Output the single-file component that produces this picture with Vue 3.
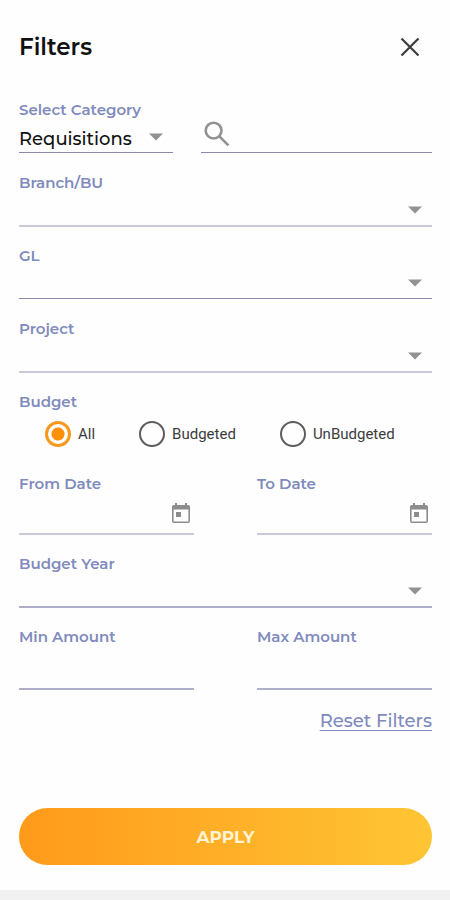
<script setup>
import { reactive } from 'vue'

const defaults = {
  category: 'Requisitions',
  search: '',
  branch: '',
  gl: '',
  project: '',
  budget: 'all',
  from: '',
  to: '',
  year: '',
  min: '',
  max: '',
}
const form = reactive({ ...defaults })

const pickers = [
  { key: 'branch', label: 'Branch/BU', line: 'soft' },
  { key: 'gl', label: 'GL', line: 'thin' },
  { key: 'project', label: 'Project', line: 'soft' },
]
const budgets = [
  { value: 'all', label: 'All' },
  { value: 'budgeted', label: 'Budgeted' },
  { value: 'unbudgeted', label: 'UnBudgeted' },
]
const dates = [
  { key: 'from', label: 'From Date' },
  { key: 'to', label: 'To Date' },
]
const amounts = [
  { key: 'min', label: 'Min Amount' },
  { key: 'max', label: 'Max Amount' },
]

function reset() {
  Object.assign(form, defaults)
}
</script>

<template>
  <main class="panel">
    <header class="header">
      <h1 class="title">Filters</h1>
      <button class="icon-button" type="button" aria-label="Close">
        <svg width="20" height="20" viewBox="0 0 20 20">
          <path d="M1.5 1.5l17 17M18.5 1.5l-17 17" fill="none" stroke="#3c3c3c" stroke-width="2.2" />
        </svg>
      </button>
    </header>

    <form class="form" @submit.prevent>
      <div class="top-row">
        <div class="field">
          <label class="label" for="category">Select Category</label>
          <div class="control thin">
            <select id="category" v-model="form.category" class="input">
              <option>Requisitions</option>
            </select>
            <svg class="arrow" width="14" height="8" viewBox="0 0 14 8"><path d="M0 .5h14l-7 7z" /></svg>
          </div>
        </div>
        <div class="control thin search">
          <svg class="lens" width="26" height="26" viewBox="0 0 26 26">
            <circle cx="9.6" cy="9.6" r="7.9" />
            <path d="M15.4 15.4l9 9" />
          </svg>
          <input v-model="form.search" class="input" type="search" aria-label="Search" />
        </div>
      </div>

      <div v-for="p in pickers" :key="p.key" class="field">
        <label class="label" :for="p.key">{{ p.label }}</label>
        <div class="control" :class="p.line">
          <select :id="p.key" v-model="form[p.key]" class="input">
            <option value=""></option>
          </select>
          <svg class="arrow" width="14" height="8" viewBox="0 0 14 8"><path d="M0 .5h14l-7 7z" /></svg>
        </div>
      </div>

      <fieldset class="budget">
        <legend class="label">Budget</legend>
        <div class="radios">
          <label v-for="b in budgets" :key="b.value" class="radio">
            <input v-model="form.budget" class="dot" type="radio" name="budget" :value="b.value" />
            <span>{{ b.label }}</span>
          </label>
        </div>
      </fieldset>

      <div class="pair">
        <div v-for="d in dates" :key="d.key" class="field">
          <label class="label" :for="d.key">{{ d.label }}</label>
          <div class="control soft date">
            <input :id="d.key" v-model="form[d.key]" class="input" type="text" />
            <button class="icon-button calendar" type="button" :aria-label="d.label">
              <svg width="24" height="24" viewBox="0 0 24 24">
                <path d="M19 3h-1V1h-2v2H8V1H6v2H5c-1.1 0-2 .9-2 2v14c0 1.1.9 2 2 2h14c1.1 0 2-.9 2-2V5c0-1.1-.9-2-2-2zm.4 16.4H4.6V7.5h14.8v11.9zM7 10h5v5H7z" />
              </svg>
            </button>
          </div>
        </div>
      </div>

      <div class="field">
        <label class="label" for="year">Budget Year</label>
        <div class="control">
          <select id="year" v-model="form.year" class="input">
            <option value=""></option>
          </select>
          <svg class="arrow" width="14" height="8" viewBox="0 0 14 8"><path d="M0 .5h14l-7 7z" /></svg>
        </div>
      </div>

      <div class="pair">
        <div v-for="a in amounts" :key="a.key" class="field">
          <label class="label" :for="a.key">{{ a.label }}</label>
          <div class="control amount">
            <input :id="a.key" v-model="form[a.key]" class="input" type="text" inputmode="decimal" />
          </div>
        </div>
      </div>

      <a class="reset" href="#" @click.prevent="reset">Reset Filters</a>
      <button class="apply" type="submit">APPLY</button>
    </form>
  </main>
</template>

<style>
html {
  background: #f1f1f1;
}
</style>

<style scoped>
.panel {
  box-sizing: border-box;
  padding: 32px 18px 25px 19px;
  background: #fefefe;
  color: #111;
  font-family: Montserrat, Inter, sans-serif;
}
.header {
  display: flex;
  align-items: center;
  justify-content: space-between;
  height: 30px;
  padding-right: 12px;
  margin-bottom: 38px;
}
.title {
  margin: 0;
  font-size: 23px;
  line-height: 30px;
  font-weight: 600;
}
.icon-button {
  display: flex;
  padding: 0;
  border: 0;
  background: none;
  cursor: pointer;
}
.form {
  display: flex;
  flex-direction: column;
  gap: 19px;
}
.top-row {
  display: grid;
  grid-template-columns: 2fr 3fr;
  gap: 28px;
  min-height: 54px;
}
.pair {
  display: grid;
  grid-template-columns: 1fr 1fr;
  gap: 63px;
}
.field {
  min-width: 0;
  min-height: 54px;
}
.label {
  display: block;
  padding: 0;
  color: #7f8abd;
  font-size: 15px;
  line-height: 20px;
  font-weight: 600;
}
.control {
  display: flex;
  align-items: center;
  position: relative;
  height: 32px;
  border-bottom: 2px solid #b0afca;
}
.control.thin {
  border-bottom: 1px solid #8788ac;
}
.control.soft {
  border-bottom-color: #c9c9db;
}
.control.date {
  height: 39px;
}
.control.amount {
  height: 41px;
}
.search {
  margin-top: 20px;
}
.input {
  appearance: none;
  flex: 1;
  min-width: 0;
  width: 100%;
  height: 100%;
  padding: 6px 0 0;
  border: 0;
  outline: 0;
  border-radius: 0;
  background: none;
  color: #111;
  font-family: inherit;
  font-size: 18px;
  font-weight: 500;
}
.arrow {
  position: absolute;
  right: 10px;
  bottom: 11px;
  fill: #929292;
  pointer-events: none;
}
.lens {
  margin: 0 8px 4px 3px;
  fill: none;
  stroke: #929292;
  stroke-width: 2.6;
}
.calendar {
  margin-right: 1px;
  fill: #8c8c8c;
}
.budget {
  min-width: 0;
  margin: 0 0 8px;
  padding: 0;
  border: 0;
}
.radios {
  display: flex;
  flex-wrap: wrap;
  column-gap: 44px;
  padding: 9px 0 0 26px;
}
.radio {
  display: flex;
  align-items: center;
  gap: 7px;
  color: #3c3c3c;
  font-family: Roboto, sans-serif;
  font-size: 15px;
  line-height: 26px;
}
.dot {
  appearance: none;
  box-sizing: border-box;
  width: 26px;
  height: 26px;
  margin: 0;
  border: 2px solid #5c5c5c;
  border-radius: 50%;
}
.dot:checked {
  border: 3px solid #f8981d;
  background: radial-gradient(circle, #ff9008 6px, transparent 7px);
}
.reset {
  align-self: flex-end;
  color: #7f8abd;
  font-size: 18px;
  line-height: 24px;
  font-weight: 500;
  text-decoration: underline;
  text-underline-offset: 3px;
}
.apply {
  height: 57px;
  margin-top: 56px;
  border: 0;
  border-radius: 29px;
  background: linear-gradient(90deg, #ff9a1b, #fec534);
  color: #fff3d5;
  font-family: inherit;
  font-size: 17px;
  font-weight: 700;
  cursor: pointer;
}
</style>
